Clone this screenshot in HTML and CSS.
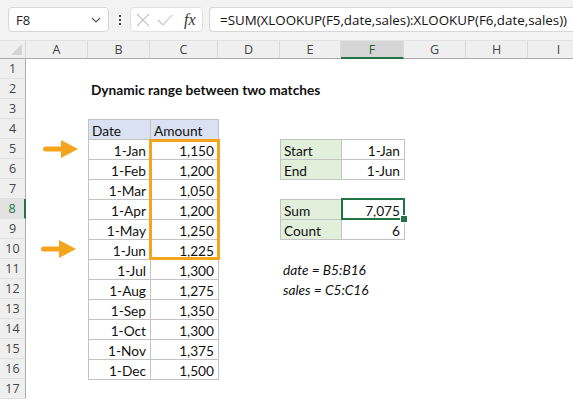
FILE: index.html
```html
<!DOCTYPE html>
<html>
<head>
<meta charset="utf-8">
<link rel="stylesheet" href="styles.css">
</head>
<body>
<div class="toolbar">
  <div class="namebox">
    <span>F8</span>
    <svg class="chev" width="10" height="6" viewBox="0 0 10 6"><path d="M1 1 L5 5 L9 1" fill="none" stroke="#555" stroke-width="1.2"/></svg>
  </div>
  <div class="dots"><i></i><i></i><i></i></div>
  <div class="fnbox">
    <svg width="14" height="14" viewBox="0 0 14 14"><path d="M1 1 L13 13 M13 1 L1 13" stroke="#c4c4c4" stroke-width="1.1" fill="none"/></svg>
    <svg width="16" height="14" viewBox="0 0 16 14"><path d="M1 7 L6 12 L15 2" stroke="#c4c4c4" stroke-width="1.1" fill="none"/></svg>
    <span class="fx">fx</span>
  </div>
  <div class="formula">=SUM(XLOOKUP(F5,date,sales):XLOOKUP(F6,date,sales))</div>
</div>

<div class="sheet">
  <div class="ch corner"><span class="tri"></span></div>
  <div class="ch">A</div>
  <div class="ch">B</div>
  <div class="ch">C</div>
  <div class="ch">D</div>
  <div class="ch">E</div>
  <div class="ch sel">F</div>
  <div class="ch">G</div>
  <div class="ch">H</div>
  <div class="ch">I</div>

  <div class="rh">1</div>
  <div class="rh">2</div>
  <div class="rh">3</div>
  <div class="rh">4</div>
  <div class="rh">5</div>
  <div class="rh">6</div>
  <div class="rh">7</div>
  <div class="rh sel">8</div>
  <div class="rh">9</div>
  <div class="rh">10</div>
  <div class="rh">11</div>
  <div class="rh">12</div>
  <div class="rh">13</div>
  <div class="rh">14</div>
  <div class="rh">15</div>
  <div class="rh">16</div>
  <div class="rh">17</div>

  <div class="cell title r2 cB">Dynamic range between two matches</div>

  <div class="cell t hd r4 cB">Date</div>
  <div class="cell t hd rc r4 cC">Amount</div>

  <div class="cell t num r5 cB">1-Jan</div><div class="cell t num rc r5 cC">1,150</div>
  <div class="cell t num r6 cB">1-Feb</div><div class="cell t num rc r6 cC">1,200</div>
  <div class="cell t num r7 cB">1-Mar</div><div class="cell t num rc r7 cC">1,050</div>
  <div class="cell t num r8 cB">1-Apr</div><div class="cell t num rc r8 cC">1,200</div>
  <div class="cell t num r9 cB">1-May</div><div class="cell t num rc r9 cC">1,250</div>
  <div class="cell t num r10 cB">1-Jun</div><div class="cell t num rc r10 cC">1,225</div>
  <div class="cell t num r11 cB">1-Jul</div><div class="cell t num rc r11 cC">1,300</div>
  <div class="cell t num r12 cB">1-Aug</div><div class="cell t num rc r12 cC">1,275</div>
  <div class="cell t num r13 cB">1-Sep</div><div class="cell t num rc r13 cC">1,350</div>
  <div class="cell t num r14 cB">1-Oct</div><div class="cell t num rc r14 cC">1,300</div>
  <div class="cell t num r15 cB">1-Nov</div><div class="cell t num rc r15 cC">1,375</div>
  <div class="cell t num last r16 cB">1-Dec</div><div class="cell t num rc last r16 cC">1,500</div>

  <div class="orange"></div>

  <div class="cell arrow a1 r5 cA">
    <svg width="40" height="22" viewBox="0 0 40 22"><path d="M4.5 8.5 H21 V13.5 H4.5 A2.5 2.5 0 0 1 4.5 8.5 Z" fill="#f5a51d"/><path d="M20 2 L37 11 L20 20 Z" fill="#f5a51d"/></svg>
  </div>
  <div class="cell arrow a2 r10 cA">
    <svg width="40" height="22" viewBox="0 0 40 22"><path d="M4.5 8.5 H21 V13.5 H4.5 A2.5 2.5 0 0 1 4.5 8.5 Z" fill="#f5a51d"/><path d="M20 2 L37 11 L20 20 Z" fill="#f5a51d"/></svg>
  </div>

  <div class="cell t lbl r5 cE">Start</div><div class="cell t num rc r5 cF">1-Jan</div>
  <div class="cell t lbl last r6 cE">End</div><div class="cell t num rc last r6 cF">1-Jun</div>

  <div class="cell t lbl r8 cE">Sum</div><div class="cell t num rc r8 cF">7,075</div>
  <div class="cell t lbl last r9 cE">Count</div><div class="cell t num rc last r9 cF">6</div>

  <div class="selbox"><span class="handle"></span></div>

  <div class="cell note r11 cE">date = B5:B16</div>
  <div class="cell note r12 cE">sales = C5:C16</div>
</div>
</body>
</html>
```

FILE: styles.css
```css
* { box-sizing: border-box; }
html, body { margin: 0; padding: 0; }
body {
  width: 573px;
  height: 400px;
  overflow: hidden;
  background: #ffffff;
  font-family: Lato, "Open Sans", sans-serif;
}

.toolbar {
  height: 40px;
  background: #f3f3f3;
  display: flex;
  align-items: center;
  padding: 0 0 1px 8px;
}
.namebox {
  width: 101px;
  height: 25px;
  background: #fff;
  border: 1px solid #d6d6d6;
  border-radius: 4px;
  display: flex;
  align-items: center;
  justify-content: space-between;
  padding: 0 7px 0 7px;
  font-family: "Open Sans", sans-serif;
  font-size: 13px;
  color: #222;
}
.dots {
  width: 21px;
  display: flex;
  flex-direction: column;
  align-items: center;
  gap: 2px;
}
.dots i {
  display: block;
  width: 2px;
  height: 2px;
  background: #444;
}
.fnbox {
  width: 73px;
  height: 25px;
  background: #fff;
  border: 1px solid #e0e0e0;
  border-radius: 4px;
  display: flex;
  align-items: center;
  padding: 0 0 0 5px;
  gap: 7px;
}
.fx {
  font-family: "Liberation Serif", serif;
  font-style: italic;
  font-size: 16px;
  color: #333;
  margin-left: 4px;
}
.formula {
  flex: 1;
  margin-left: 6px;
  height: 25px;
  background: #fff;
  border: 1px solid #d6d6d6;
  border-radius: 4px 0 0 4px;
  border-right: none;
  display: flex;
  align-items: center;
  padding-left: 10px;
  font-family: "Open Sans", sans-serif;
  font-size: 13.35px;
  color: #111;
  white-space: nowrap;
}

.sheet {
  display: grid;
  grid-template-columns: 26px 62px 62px 68px 62px 61px 63px 62px 62px 62px;
  grid-template-rows: 19px repeat(17, 20px);
}

.ch {
  grid-row: 1;
  background: #efefef;
  border-top: 1px solid #e2e2e2;
  border-right: 1px solid #d9d9d9;
  border-bottom: 1px solid #ababab;
  display: flex;
  align-items: center;
  justify-content: center;
  font-family: "Open Sans", sans-serif;
  font-size: 12.5px;
  color: #444;
}
.ch.sel {
  background: #d6d6d6;
  border-bottom: 2px solid #217346;
  color: #1f5e3a;
}
.corner { position: relative; }
.tri {
  position: absolute;
  right: 3px;
  bottom: 3px;
  width: 0;
  height: 0;
  border-left: 11px solid transparent;
  border-bottom: 11px solid #d4d4d4;
}

.rh {
  grid-column: 1;
  background: #efefef;
  border-right: 1px solid #ababab;
  border-bottom: 1px solid #e0e0e0;
  display: flex;
  align-items: center;
  justify-content: center;
  font-family: "Open Sans", sans-serif;
  font-size: 12.5px;
  color: #444;
}
.rh.sel {
  background: #e2e2e2;
  border-right: 2px solid #217346;
  color: #217346;
}

.cell {
  font-size: 13.7px;
  color: #111;
  display: flex;
  align-items: center;
  padding: 1px 3px 0 3px;
  white-space: nowrap;
}

.r2 { grid-row: 3; }
.r4 { grid-row: 5; }
.r5 { grid-row: 6; }
.r6 { grid-row: 7; }
.r7 { grid-row: 8; }
.r8 { grid-row: 9; }
.r9 { grid-row: 10; }
.r10 { grid-row: 11; }
.r11 { grid-row: 12; }
.r12 { grid-row: 13; }
.r13 { grid-row: 14; }
.r14 { grid-row: 15; }
.r15 { grid-row: 16; }
.r16 { grid-row: 17; }

.cA { grid-column: 2; }
.cB { grid-column: 3; }
.cC { grid-column: 4; }
.cE { grid-column: 6; }
.cF { grid-column: 7; }

.title {
  grid-column: 3 / span 5;
  font-weight: 700;
  padding-left: 3px;
}
.t {
  border-left: 1px solid #c3c3c3;
  border-top: 1px solid #c3c3c3;
}
.t.rc {
  border-right: 1px solid #c3c3c3;
  margin-right: -1px;
}
.t.last {
  border-bottom: 1px solid #c3c3c3;
  margin-bottom: -1px;
}
.hd { background: #d9e1f2; }
.num { justify-content: flex-end; padding-right: 4px; }
.lbl { background: #e2efda; }

.orange {
  grid-column: 4;
  grid-row: 6 / 12;
  border: 3px solid #f5a51d;
  margin: 0 -2px -1px -1px;
  z-index: 2;
}

.arrow { padding: 0; align-items: flex-start; }
.arrow svg { display: block; margin-top: -1px; }
.a1 svg { margin-left: 15px; }
.a2 svg { margin-left: 13px; }

.selbox {
  grid-column: 7;
  grid-row: 9;
  border: 2px solid #217346;
  margin: -1px -1px -1px 0;
  position: relative;
  z-index: 3;
}
.handle {
  position: absolute;
  right: -4px;
  bottom: -4px;
  width: 6px;
  height: 6px;
  background: #217346;
  outline: 1px solid #fff;
}

.note {
  grid-column: 6 / span 4;
  font-style: italic;
  padding-left: 3px;
}
```
